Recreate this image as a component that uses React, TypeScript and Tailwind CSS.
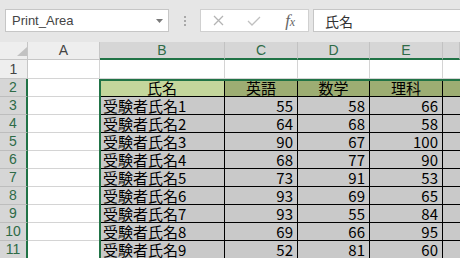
import React from "react";

const rows: [string, number, number, number][] = [
  ["受験者氏名1", 55, 58, 66],
  ["受験者氏名2", 64, 68, 58],
  ["受験者氏名3", 90, 67, 100],
  ["受験者氏名4", 68, 77, 90],
  ["受験者氏名5", 73, 91, 53],
  ["受験者氏名6", 93, 69, 65],
  ["受験者氏名7", 93, 55, 84],
  ["受験者氏名8", 69, 66, 95],
  ["受験者氏名9", 52, 81, 60],
];

const rowHead =
  "bg-[#d6d6d6] border-b border-b-[#bdbdbd] border-r-2 border-r-[#217346] flex items-center justify-center text-[14px] text-[#2e6b47] font-['Liberation_Sans',sans-serif]";
const colA = "bg-white border-r border-b border-[#d4d4d4]";
const nameCell =
  "bg-[#c9c9c9] border-r border-b border-black flex items-start pl-[3px] text-[15px] leading-[17px] text-black font-['Noto_Sans_CJK_JP',sans-serif] whitespace-nowrap";
const numCell =
  "bg-[#c9c9c9] border-r border-b border-black flex items-start justify-end pr-[4px] text-[15px] leading-[17px] text-black font-['Noto_Sans_CJK_JP',sans-serif]";
const headCell =
  "bg-[#9dad73] border-r border-b border-black flex items-start justify-center text-[15px] leading-[17px] text-black font-['Noto_Sans_CJK_JP',sans-serif]";
const fCell = "bg-[#c9c9c9] border-b border-black";

export default function App() {
  return (
    <div className="w-[460px] h-[258px] overflow-hidden bg-white flex flex-col">
      {/* Formula bar */}
      <div className="h-[42px] shrink-0 bg-[#e6e6e6] flex items-start pt-[9px] pl-[5px]">
        <div className="w-[164px] h-[23px] bg-white border border-[#c6c6c6] flex items-center justify-between pl-[6px] pr-[5px]">
          <span className="text-[13px] text-[#444] font-['Liberation_Sans',sans-serif] leading-none">Print_Area</span>
          <svg width="7" height="4" viewBox="0 0 7 4">
            <polygon points="0,0 7,0 3.5,4" fill="#7a7a7a" />
          </svg>
        </div>
        <div className="w-[31px] h-[23px] flex flex-col items-center justify-center gap-[2px]">
          <div className="w-[2px] h-[2px] bg-[#a8a8a8]" />
          <div className="w-[2px] h-[2px] bg-[#a8a8a8]" />
          <div className="w-[2px] h-[2px] bg-[#a8a8a8]" />
        </div>
        <div className="w-[109px] h-[23px] bg-white border border-[#d0d0d0] grid grid-cols-3 items-center">
          <div className="flex justify-center">
            <svg width="11" height="11" viewBox="0 0 11 11">
              <path d="M1 1 L10 10 M10 1 L1 10" stroke="#b4b4b4" strokeWidth="1.3" fill="none" />
            </svg>
          </div>
          <div className="flex justify-center">
            <svg width="14" height="10" viewBox="0 0 14 10">
              <path d="M1 5 L5 9 L13 1" stroke="#c0c0c0" strokeWidth="1.3" fill="none" />
            </svg>
          </div>
          <div className="flex justify-center items-center">
            <span className="italic font-['Liberation_Serif',serif] text-[#666] text-[17px] leading-none">
              f<span className="text-[12px]">x</span>
            </span>
          </div>
        </div>
        <div className="ml-[4px] flex-1 h-[23px] bg-white border border-r-0 border-[#c6c6c6] flex items-center pl-[11px]">
          <span className="text-[14px] text-[#333] font-['Noto_Sans_CJK_JP',sans-serif] leading-none">氏名</span>
        </div>
      </div>

      {/* Sheet grid */}
      <div className="relative grid grid-cols-[28px_72px_125px_73px_72px_73px_1fr] grid-rows-[18px_19px_repeat(10,18px)]">
        {/* Column header row */}
        <div className="bg-[#eeeeee] border-r border-b border-[#c6c6c6] flex items-end justify-end pb-[3px]">
          <svg width="10" height="9" viewBox="0 0 10 9">
            <polygon points="10,0 10,9 0,9" fill="#c2c2c2" />
          </svg>
        </div>
        <div className="bg-[#eeeeee] border-r border-b border-[#c6c6c6] flex items-center justify-center text-[14px] text-[#444] font-['Liberation_Sans',sans-serif]">
          A
        </div>
        {["B", "C", "D", "E", ""].map((l, i) => (
          <div
            key={i}
            className="bg-[#d6d6d6] border-r border-r-[#c2c2c2] border-b-2 border-b-[#217346] flex items-center justify-center text-[14px] text-[#2e6b47] font-['Liberation_Sans',sans-serif]"
          >
            {l}
          </div>
        ))}

        {/* Row 1 */}
        <div className="bg-[#eeeeee] border-r border-b border-[#c6c6c6] flex items-center justify-center text-[14px] text-[#444] font-['Liberation_Sans',sans-serif]">
          1
        </div>
        <div className={colA} />
        <div className="bg-white border-r border-b border-[#d4d4d4]" />
        <div className="bg-white border-r border-b border-[#d4d4d4]" />
        <div className="bg-white border-r border-b border-[#d4d4d4]" />
        <div className="bg-white border-r border-b border-[#d4d4d4]" />
        <div className="bg-white border-b border-[#d4d4d4]" />

        {/* Row 2 headers */}
        <div className={rowHead}>2</div>
        <div className={colA} />
        <div className="bg-[#c4d69c] border-r border-b border-black flex items-start justify-center text-[15px] leading-[17px] text-black font-['Noto_Sans_CJK_JP',sans-serif]">
          氏名
        </div>
        <div className={headCell}>英語</div>
        <div className={headCell}>数学</div>
        <div className={headCell}>理科</div>
        <div className="bg-[#9dad73] border-b border-black" />

        {/* Data rows */}
        {rows.map((r, i) => (
          <React.Fragment key={i}>
            <div className={rowHead}>{i + 3}</div>
            <div className={colA} />
            <div className={nameCell}>{r[0]}</div>
            <div className={numCell}>{r[1]}</div>
            <div className={numCell}>{r[2]}</div>
            <div className={numCell}>{r[3]}</div>
            <div className={fCell} />
          </React.Fragment>
        ))}

        {/* Selection border overlay */}
        <div className="pointer-events-none absolute left-[99px] top-[37px] w-[400px] h-[300px] border-2 border-[#217346]" />
      </div>
    </div>
  );
}
